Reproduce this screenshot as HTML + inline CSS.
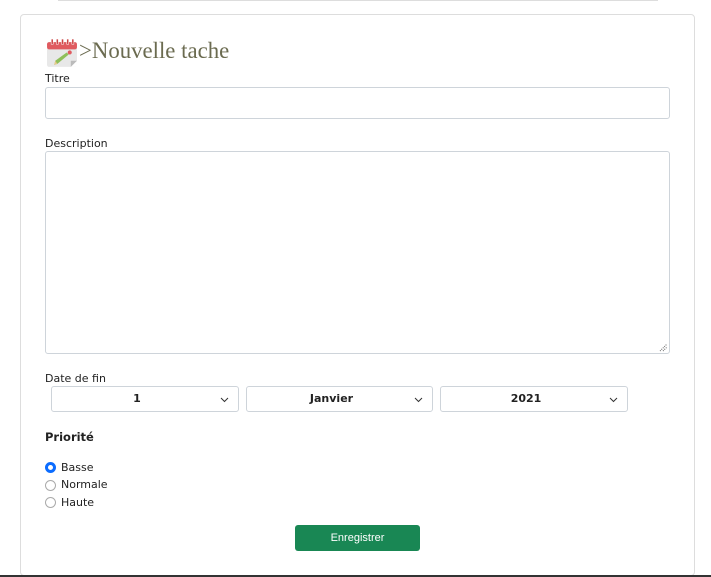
<!DOCTYPE html>
<html><head><meta charset="utf-8"><style>
*{box-sizing:border-box;margin:0;padding:0}
body{width:711px;height:577px;background:#fff;position:relative;overflow:hidden;font-family:"DejaVu Sans","Liberation Sans",sans-serif;font-size:11px;color:#222}
.a{position:absolute}
.card{left:20px;top:14px;width:675px;height:562px;border:1px solid #ddd;border-radius:4px}
.inp{border:1px solid #ced4da;border-radius:3px;background:#fff}
.sel{border:1px solid #ced4da;border-radius:3px;height:26px;text-align:center;line-height:24px;font-weight:bold;font-size:11px;padding-right:16px}
.sel svg{position:absolute;right:9px;top:10px}
.rad{width:11px;height:11px;border:1px solid #aaa;border-radius:50%;left:45px}
</style></head><body>
<div class="a" style="left:58px;top:0;width:600px;height:1px;background:#ddd"></div>
<div class="a card"></div>
<svg class="a" style="left:46px;top:39px" width="32" height="29" viewBox="0 0 31 28">
<rect x="1" y="3" width="29" height="24" rx="2" fill="#e8e8e8"/>
<rect x="1" y="3" width="29" height="7" rx="2" fill="#e05a5f"/>
<g fill="#c44" stroke="#fff" stroke-width="0.5"><rect x="5" y="0" width="2" height="5"/><rect x="10" y="0" width="2" height="5"/><rect x="15" y="0" width="2" height="5"/><rect x="20" y="0" width="2" height="5"/><rect x="25" y="0" width="2" height="5"/></g>
<path d="M24 27 L30 21 L30 27Z" fill="#fff"/><path d="M24 27 L24 21 L30 21Z" fill="#bbb"/>
<path d="M8 25 L9 21 L20 13 L22 15 L11 24Z" fill="#8fbf5a"/>
<path d="M8 25 L9 21 L11 24Z" fill="#e9c88a"/>
<circle cx="23" cy="13" r="2" fill="#e05a5f"/>
</svg>
<div class="a" style="left:79px;top:38px;font-family:'Liberation Serif',serif;font-size:22.8px;color:#6b6b50">&gt;Nouvelle tache</div>
<div class="a" style="left:45px;top:72px">Titre</div>
<div class="a inp" style="left:45px;top:87px;width:625px;height:32px"></div>
<div class="a" style="left:45px;top:137px">Description</div>
<div class="a inp" style="left:45px;top:151px;width:625px;height:203px"></div>
<svg class="a" style="left:659px;top:343px" width="9" height="9"><path d="M1 8L8 1M4 8L8 4" stroke="#666" stroke-width="1" stroke-dasharray="1,1"/></svg>
<div class="a" style="left:45px;top:372px">Date de fin</div>
<div class="a sel" style="left:51px;top:386px;width:188px">1<svg width="9" height="6"><path d="M1 1L4.5 4.5L8 1" stroke="#333" fill="none"/></svg></div>
<div class="a sel" style="left:246px;top:386px;width:187px">Janvier<svg width="9" height="6"><path d="M1 1L4.5 4.5L8 1" stroke="#333" fill="none"/></svg></div>
<div class="a sel" style="left:440px;top:386px;width:188px">2021<svg width="9" height="6"><path d="M1 1L4.5 4.5L8 1" stroke="#333" fill="none"/></svg></div>
<div class="a" style="left:45px;top:430px;font-weight:bold;font-size:11.5px">Priorité</div>
<div class="a rad" style="top:462px;border:3px solid #0b6cff"></div>
<div class="a" style="left:61px;top:461px">Basse</div>
<div class="a rad" style="top:480px"></div>
<div class="a" style="left:61px;top:478px">Normale</div>
<div class="a rad" style="top:497px"></div>
<div class="a" style="left:61px;top:496px">Haute</div>
<div class="a" style="left:295px;top:525px;width:125px;height:26px;background:#198754;border-radius:3px;color:#fff;text-align:center;line-height:26px;font-family:'Liberation Sans',sans-serif;font-size:11px">Enregistrer</div>
<div class="a" style="left:0;top:575px;width:711px;height:2px;background:#333"></div>
</body></html>
